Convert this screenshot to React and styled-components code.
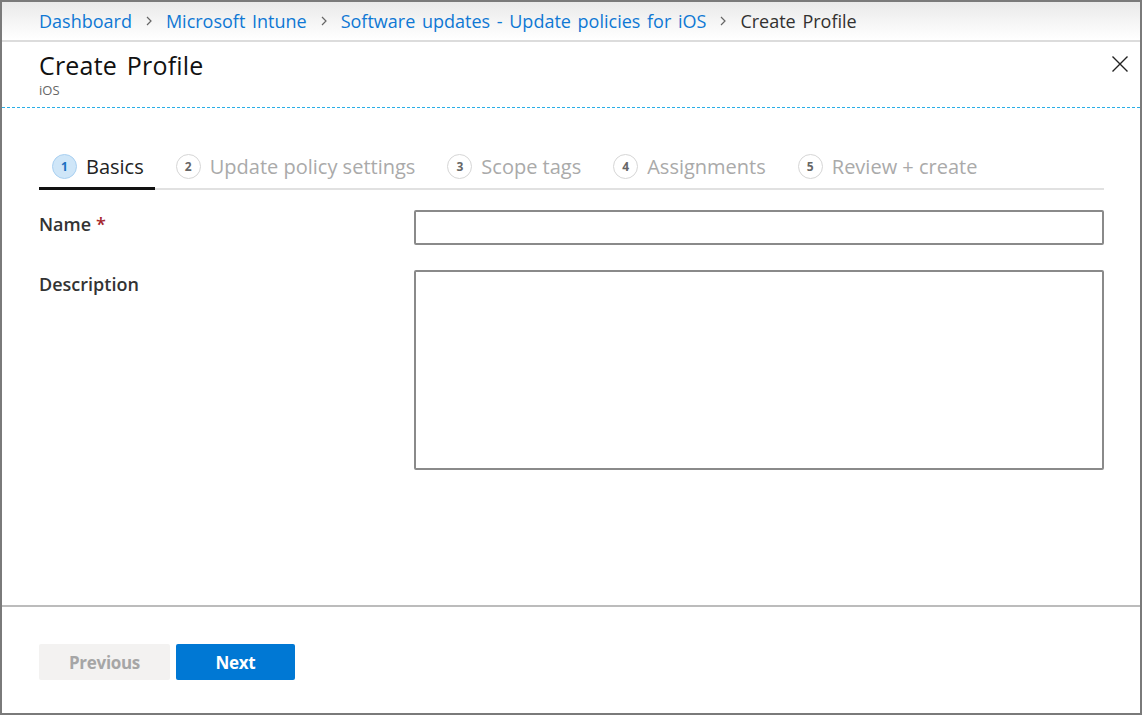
import React from 'react'
import styled, { createGlobalStyle } from 'styled-components'

const GlobalStyle = createGlobalStyle`
  html, body { margin: 0; padding: 0; background: #fff; }
  * { box-sizing: border-box; }
  body { font-family: "Open Sans", "Noto Sans", sans-serif; color: #323130; }
`

const Frame = styled.div`
  width: 1142px;
  height: 715px;
  border: 2px solid #7a7a7a;
  display: flex;
  flex-direction: column;
  background: #fff;
  overflow: hidden;
`

const Crumbs = styled.nav`
  height: 40px;
  flex: none;
  display: flex;
  align-items: center;
  padding: 0 37px 1px;
  background: linear-gradient(#e9e9e9, #f7f7f7 60%, #fff);
  border-bottom: 2px solid #dcdcdc;
  font-size: 18px;
  word-spacing: 2px;
`

const Crumb = styled.a`
  color: ${p => (p.$current ? '#323130' : '#0f78d4')};
  text-decoration: none;
  white-space: nowrap;
`

const Chevron = styled.svg`
  width: 10px;
  height: 10px;
  margin: 0 12px;
  flex: none;
`

const Header = styled.header`
  flex: none;
  position: relative;
  height: 66px;
  padding: 7px 37px 0;
  background-image: repeating-linear-gradient(90deg, #2aaee6 0 3px, transparent 3px 5px);
  background-size: 100% 1px;
  background-repeat: no-repeat;
  background-position: bottom left;
`

const Title = styled.h1`
  margin: 0;
  font-size: 25px;
  font-weight: 400;
  line-height: 33px;
  color: #111;
  letter-spacing: 0.2px;
  word-spacing: 3px;
`

const Sub = styled.div`
  font-size: 13px;
  color: #666;
  line-height: 16px;
`

const Close = styled.button`
  position: absolute;
  right: 8px;
  top: 10px;
  width: 24px;
  height: 24px;
  padding: 0;
  border: 0;
  background: none;
  display: flex;
  align-items: center;
  justify-content: center;
`

const Body = styled.main`
  flex: 1;
  padding: 42px 36px 0 37px;
`

const Tabs = styled.div`
  display: flex;
  gap: 8px;
  height: 40px;
  border-bottom: 2px solid #e1e1e1;
`

const Tab = styled.div`
  display: flex;
  align-items: center;
  gap: 9px;
  padding: 0 11px 4px 13px;
  margin-bottom: -2px;
  border-bottom: 3px solid ${p => (p.$active ? '#111' : 'transparent')};
  font-size: 20px;
  color: ${p => (p.$active ? '#222' : '#aaa')};
  white-space: nowrap;
`

const Step = styled.span`
  width: 25px;
  height: 25px;
  border-radius: 50%;
  flex: none;
  display: flex;
  align-items: center;
  justify-content: center;
  font-size: 12px;
  font-weight: 700;
  background: ${p => (p.$active ? '#cfe6f8' : '#fff')};
  border: 1.5px solid ${p => (p.$active ? '#a9d0f1' : '#d6d6d6')};
  color: ${p => (p.$active ? '#1a6fbf' : '#666')};
`

const Form = styled.div`
  display: grid;
  grid-template-columns: 375px 1fr;
  row-gap: 25px;
  padding-top: 20px;
`

const Label = styled.label`
  font-size: 18px;
  font-weight: 600;
  color: #333;
  line-height: 29px;
`

const Req = styled.span`
  color: #a4262c;
  margin-left: 5px;
`

const Input = styled.input`
  height: 35px;
  border: 2px solid #8a8a8a;
  border-radius: 2px;
  font: inherit;
  padding: 0 8px;
  outline: none;
`

const Area = styled.textarea`
  height: 200px;
  border: 2px solid #8a8a8a;
  border-radius: 2px;
  font: inherit;
  padding: 6px 8px;
  resize: none;
  outline: none;
`

const Footer = styled.footer`
  flex: none;
  height: 108px;
  border-top: 2px solid #bcbcbc;
  display: flex;
  align-items: flex-start;
  gap: 6px;
  padding: 37px 37px 0;
`

const Button = styled.button`
  height: 36px;
  width: ${p => p.$w}px;
  border: 0;
  border-radius: 2px;
  font-family: inherit;
  font-size: 17px;
  font-weight: 700;
  letter-spacing: -0.3px;
  background: ${p => (p.$primary ? '#0078d4' : '#f3f2f1')};
  color: ${p => (p.$primary ? '#fff' : '#a6a6a6')};
`

const ChevronIcon = () => (
  <Chevron viewBox="0 0 10 10">
    <path d="M3 1l4 4-4 4" fill="none" stroke="#666" strokeWidth="1.2" />
  </Chevron>
)

const steps = ['Basics', 'Update policy settings', 'Scope tags', 'Assignments', 'Review + create']

export default function App() {
  return (
    <>
      <GlobalStyle />
      <Frame>
        <Crumbs>
          <Crumb href="#">Dashboard</Crumb>
          <ChevronIcon />
          <Crumb href="#">Microsoft Intune</Crumb>
          <ChevronIcon />
          <Crumb href="#">Software updates - Update policies for iOS</Crumb>
          <ChevronIcon />
          <Crumb $current>Create Profile</Crumb>
        </Crumbs>
        <Header>
          <Title>Create Profile</Title>
          <Sub>iOS</Sub>
          <Close aria-label="Close">
            <svg width="16" height="16" viewBox="0 0 16 16">
              <path d="M0.5 0.5l15 15M15.5 0.5l-15 15" stroke="#222" strokeWidth="1.4" />
            </svg>
          </Close>
        </Header>
        <Body>
          <Tabs>
            {steps.map((s, i) => (
              <Tab key={s} $active={i === 0}>
                <Step $active={i === 0}>{i + 1}</Step>
                {s}
              </Tab>
            ))}
          </Tabs>
          <Form>
            <Label>Name<Req>*</Req></Label>
            <Input />
            <Label>Description</Label>
            <Area />
          </Form>
        </Body>
        <Footer>
          <Button $w={131}>Previous</Button>
          <Button $primary $w={119}>Next</Button>
        </Footer>
      </Frame>
    </>
  )
}
